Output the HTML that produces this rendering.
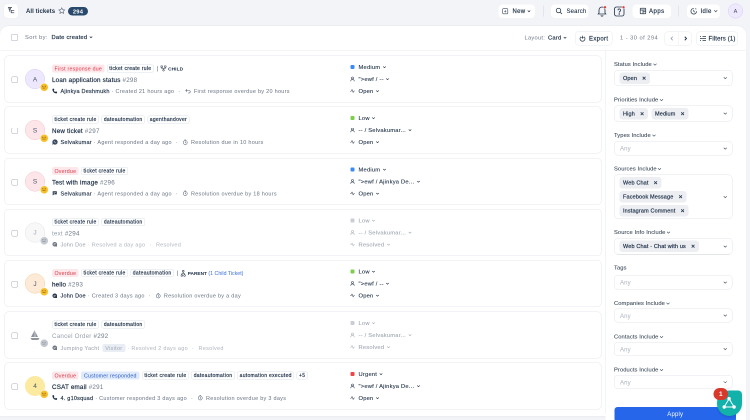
<!DOCTYPE html>
<html><head><meta charset="utf-8">
<style>
*{box-sizing:border-box;margin:0;padding:0}
html,body{width:750px;height:420px;overflow:hidden;background:#f3f4f8}
body{font-family:"Liberation Sans",sans-serif;color:#1e2f45}
#root{position:absolute;left:0;top:0;width:1500px;height:840px;transform:scale(0.5) translateZ(0);transform-origin:0 0;will-change:transform;background:#f3f4f8}
.abs{position:absolute}
.hbtn{position:absolute;background:#fff;border-radius:8px;height:27px;top:9px;display:flex;align-items:center;padding-bottom:1px;font-size:12px;font-weight:400;-webkit-text-stroke:.35px currentColor;color:#1e2f45;letter-spacing:.3px}
.vsep{position:absolute;width:2px;background:#e3e5ea;top:11px;height:22px}
#panel{position:absolute;left:0;top:51px;width:1492px;height:781px;background:#fff;border-radius:18px 18px 0 0;border-top:1.5px solid #e6e8ed;box-shadow:0 2px 3px rgba(20,30,60,.03)}
.tbtn{position:absolute;white-space:nowrap;border:1px solid #e8eaee;border-radius:8px;height:29px;top:62px;display:flex;align-items:center;font-size:12px;font-weight:400;-webkit-text-stroke:.35px currentColor;color:#1e2f45;background:#fff}
.card{position:absolute;left:9px;width:1194px;height:94px;border:1px solid #e6e8ed;border-radius:8px;background:#fff}
.cb{position:absolute;left:13px;top:41px;width:13px;height:13px;border:1.5px solid #a9b1bd;border-radius:3px}
.av{position:absolute;left:40px;top:26px;width:40px;height:40px;border-radius:50%;display:flex;align-items:center;justify-content:center;font-size:13px;color:#4a5568}
.emo{position:absolute;left:69.5px;top:54px;width:17px;height:17px;border-radius:50%;background:#f5b82a;border:1.5px solid #fff}
.chips{position:absolute;left:94px;top:17px;display:flex;align-items:center;height:16px;white-space:nowrap}
.chip{height:16px;border:1px solid #dce2ea;border-radius:4px;padding:0 4px 1px;font-size:10px;font-weight:400;-webkit-text-stroke:.35px currentColor;color:#1b2d45;display:flex;align-items:center;margin-right:4.5px;letter-spacing:.6px}
.chip.red{background:#fde7ea;border-color:#fde7ea;color:#dc3545;font-weight:400;-webkit-text-stroke:0;letter-spacing:.45px;font-size:10.5px;padding:0 4px}
.chip.blue{background:#dfebfd;border-color:#dfebfd;color:#2a5bc6;font-weight:400;-webkit-text-stroke:0;letter-spacing:.4px;font-size:10.5px;padding:0 5px}
.title{position:absolute;left:94px;top:41px;font-size:12.5px;font-weight:400;-webkit-text-stroke:.4px currentColor;white-space:nowrap;color:#1e2f45;letter-spacing:.4px}
.title span{font-weight:400;color:#6f7988;letter-spacing:.5px;-webkit-text-stroke:0}
.meta{position:absolute;left:94px;top:64px;font-size:11px;white-space:nowrap;color:#6a7484;display:flex;align-items:center;letter-spacing:.55px}
.meta b{color:#22334a;font-weight:400;-webkit-text-stroke:.3px currentColor;letter-spacing:.45px}
.meta .dot{margin:0 9px 0 8px}
.meta svg{margin-right:6px}
.rc{position:absolute;left:690px;font-size:11.5px;color:#1e2f45;display:flex;align-items:center;white-space:nowrap;letter-spacing:.45px;-webkit-text-stroke:.2px currentColor}
.rc .ic{width:10px;height:10px;margin-right:7px;display:flex;align-items:center;justify-content:center}
.sq{width:8px;height:8px;border-radius:2px}
.chev{margin-left:4px}
.faded{opacity:.5}
.flabel{position:absolute;left:1228px;font-size:11.5px;color:#3a4757;-webkit-text-stroke:.15px currentColor;white-space:nowrap;letter-spacing:.2px}
.fbox{position:absolute;left:1228px;width:237px;border:1px solid #e3e6eb;border-radius:8px;background:#fff}
.fchip{position:absolute;left:10px;height:23px;background:#eceef2;border-radius:6px;font-size:11px;font-weight:400;-webkit-text-stroke:.35px currentColor;color:#1b2d45;display:flex;align-items:center;padding:0 8px 1px 7px;white-space:nowrap;letter-spacing:.3px}
.fchip i{font-style:normal;margin-left:10px;font-size:10px;-webkit-text-stroke:.5px currentColor}
.any{position:absolute;left:11px;top:6.5px;font-size:12px;letter-spacing:.3px;color:#adb4be}
.fchev{position:absolute;right:9px;top:50%;margin-top:-3px}
</style></head><body>
<div id="root">
  <!-- header -->
  <div class="abs" style="left:8px;top:8px;width:28px;height:28px;background:#fff;border-radius:7px;box-shadow:0 0 0 1px #eef0f3"></div>
  <svg class="abs" style="left:12px;top:12px" width="20" height="20" viewBox="0 0 20 20" fill="none" stroke="#4a5668" stroke-width="1.7"><path d="M4 3h8"/><circle cx="7.5" cy="5.5" r="1.6"/><path d="M7.5 7v4.5"/><path d="M16.5 9h-6v4.5h6"/></svg>
  <div class="abs" style="left:52px;top:15px;font-size:12px;font-weight:700;letter-spacing:.15px;color:#1e2f45">All tickets</div>
  <svg class="abs" style="left:116px;top:14px" width="15" height="15" viewBox="0 0 24 24" fill="none" stroke="#5a6677" stroke-width="1.8"><path d="M12 2.5l2.9 6.1 6.6.8-4.9 4.5 1.3 6.6L12 17.2l-5.9 3.3 1.3-6.6-4.9-4.5 6.6-.8z"/></svg>
  <div class="abs" style="left:136px;top:14px;width:40px;height:17px;border-radius:9px;background:#28496b;color:#fff;font-size:11.5px;font-weight:700;display:flex;align-items:center;justify-content:center;letter-spacing:.5px">294</div>

  <div class="hbtn" style="left:997px;width:73px"><svg style="margin-left:7px" width="13" height="13" viewBox="0 0 14 14" fill="none" stroke="#3d4a5c" stroke-width="1.3"><rect x="1.5" y="1.5" width="11" height="11" rx="1.5"/><path d="M7 4.5v5M4.5 7h5"/></svg><span style="margin-left:8px;letter-spacing:.6px">New</span><svg style="margin-left:3px" width="8" height="8" viewBox="0 0 8 8" fill="none" stroke="#1e2f45" stroke-width="1.3"><path d="M1.5 3l2.5 2.5L6.5 3"/></svg></div>
  <div class="vsep" style="left:1086px"></div>
  <div class="hbtn" style="left:1102px;width:75px;-webkit-text-stroke:.15px currentColor"><svg style="margin-left:9px" width="14" height="14" viewBox="0 0 14 14" fill="none" stroke="#1e2f45" stroke-width="1.5"><circle cx="6" cy="6" r="4.5"/><path d="M9.5 9.5l3.5 3.5"/></svg><span style="margin-left:8px;letter-spacing:.3px">Search</span></div>
  <svg class="abs" style="left:1194px;top:11px" width="20" height="22" viewBox="0 0 20 22" fill="none" stroke="#2b3a4e" stroke-width="1.7"><path d="M4 15V9a6 6 0 0 1 12 0v6l1.5 2h-15z"/><path d="M8 19.5a2 2 0 0 0 4 0"/><circle cx="16" cy="3.5" r="2.8" fill="#e53935" stroke="#f3f4f8" stroke-width="1"/></svg>
  <svg class="abs" style="left:1227px;top:11px" width="24" height="23" viewBox="0 0 24 23" fill="none" stroke="#2b3a4e" stroke-width="1.7"><rect x="2" y="3" width="19" height="18" rx="4"/><path d="M9 9.5a2.6 2.6 0 1 1 3.6 2.4c-.8.4-1.1.9-1.1 1.8v.6"/><circle cx="11.5" cy="17" r=".6" fill="#2b3a4e"/><circle cx="20" cy="3.5" r="2.8" fill="#e53935" stroke="#f3f4f8" stroke-width="1"/></svg>
  <div class="hbtn" style="left:1265px;width:77px"><svg style="margin-left:14px" width="14" height="14" viewBox="0 0 14 14" fill="none" stroke="#2b3a4e" stroke-width="1.4"><rect x="1.5" y="1.5" width="11" height="11" rx="1"/><path d="M1.5 5h11M7 5v7.5M7 8.5h5.5"/></svg><span style="margin-left:5px;letter-spacing:1px">Apps</span></div>
  <div class="vsep" style="left:1356px"></div>
  <div class="hbtn" style="left:1374px;width:66px;top:9px"><svg style="margin-left:6px" width="15" height="15" viewBox="0 0 16 16" fill="none" stroke="#2b3a4e" stroke-width="1.6"><path d="M14 8A6 6 0 1 1 8 2"/><path d="M8 5v3l2 2"/><path d="M11 2.5l2.5 1"/></svg><span style="margin-left:6px;letter-spacing:.75px">Idle</span><svg style="margin-left:4px" width="9" height="8" viewBox="0 0 9 8" fill="none" stroke="#3d4a5c" stroke-width="1.3"><path d="M1.5 2.5l3 3 3-3"/></svg></div>
  <div class="abs" style="left:1456px;top:7px;width:30px;height:30px;border-radius:50%;background:#efe9fd;border:1px solid #d9cdf7;color:#4b4e6d;font-size:11px;display:flex;align-items:center;justify-content:center">A</div>

  <!-- main panel -->
  <div id="panel"></div><div class="abs" style="left:1211px;top:830px;width:281px;height:10px;background:#fff"></div>
  <div class="abs" style="left:22px;top:68px;width:14px;height:14px;border:1.5px solid #a9b1bd;border-radius:3px"></div>
  <div class="abs" style="left:50px;top:67.5px;font-size:11.5px;color:#6f7988;letter-spacing:.76px">Sort by:</div>
  <div class="abs" style="left:103px;top:67.5px;font-size:11.5px;-webkit-text-stroke:.35px currentColor;color:#1e2f45;letter-spacing:.48px">Date created <svg width="8" height="8" viewBox="0 0 8 8" fill="none" stroke="#1e2f45" stroke-width="1.3"><path d="M1.5 3l2.5 2.5L6.5 3"/></svg></div>

  <div class="abs" style="left:1049px;top:68.5px;font-size:11.5px;color:#6f7988;letter-spacing:.5px">Layout:</div>
  <div class="abs" style="left:1096px;top:68.5px;font-size:11.5px;-webkit-text-stroke:.35px currentColor;color:#1e2f45;letter-spacing:.42px">Card <svg width="8" height="8" viewBox="0 0 8 8" fill="none" stroke="#1e2f45" stroke-width="1.3"><path d="M1.5 3l2.5 2.5L6.5 3"/></svg></div>
  <div class="tbtn" style="left:1150px;width:75px"><svg style="margin-left:7px" width="14" height="14" viewBox="0 0 14 14" fill="none" stroke="#2b3a4e" stroke-width="1.5"><path d="M4 3.5a5 5 0 1 0 6 0"/><path d="M7 1.5v5M5 4.5L7 6.5 9 4.5"/></svg><span style="margin-left:6px;letter-spacing:.67px">Export</span></div>
  <div class="abs" style="left:1240px;top:69px;font-size:11.5px;color:#6f7988;letter-spacing:.9px">1 - 30 of 294</div>
  <div class="tbtn" style="left:1329px;width:55px;top:63px;height:28px"><div style="position:absolute;left:27px;top:0;width:1px;height:26px;background:#eceef2"></div><svg style="position:absolute;left:9px;top:8px" width="10" height="10" viewBox="0 0 10 10" fill="none" stroke="#8a93a0" stroke-width="1.5"><path d="M6.5 1.5L3 5l3.5 3.5"/></svg><svg style="position:absolute;left:36px;top:8px" width="10" height="10" viewBox="0 0 10 10" fill="none" stroke="#1e2f45" stroke-width="1.8"><path d="M3.5 1.5L7 5 3.5 8.5"/></svg></div>
  <div class="tbtn" style="left:1392px;width:84px;top:63px;height:28px"><svg style="margin-left:6px" width="14" height="12" viewBox="0 0 14 12" fill="none" stroke="#2b3a4e" stroke-width="1.3"><path d="M6 2h7M1 6h12M6 10h7M1 2h2M1 10h2"/></svg><span style="margin-left:4px;letter-spacing:.3px">Filters (1)</span></div>
  <div class="abs" style="left:1px;top:100px;width:1490px;height:1px;background:#e8eaee"></div>
  <div class="abs" style="left:1210px;top:101px;width:1px;height:726px;background:#e8eaee"></div>

  <div class="card" style="top:111.0px"><div class="cb"></div><div class="av" style="background:#ede8fd;border:1px solid #d9cdf7;color:#4a5568">A</div><div class="emo" style="background:#f6bf2c"><svg width="14" height="14" viewBox="0 0 12 12" style="position:absolute;left:0;top:0"><circle cx="4" cy="4.8" r=".9" fill="#7a4a00"/><circle cx="8" cy="4.8" r=".9" fill="#7a4a00"/><path d="M3.5 7.8h5" stroke="#7a4a00" stroke-width=".9"/></svg></div><div class="chips"><span class="chip red">First response due</span><span class="chip ">ticket create rule</span><span style="width:1px;height:11px;background:#5a6677;margin:0 5px 0 3px"></span><svg width="12" height="12" viewBox="0 0 12 12" fill="none" stroke="#2b3a4e" stroke-width="1.1"><rect x=".8" y=".8" width="3.4" height="3" rx=".6"/><rect x="7.8" y=".8" width="3.4" height="3" rx=".6"/><path d="M2.5 3.8v2.2h7V3.8M6 6v2"/><circle cx="6" cy="9.6" r="1.6"/></svg><span style="font-size:9.5px;font-weight:700;letter-spacing:.2px;margin-left:3px;color:#1b2d45">CHILD</span></div><div class="title" style="color:#1e2f45;">Loan application status <span>#298</span></div><div class="meta"><svg width="11" height="11" viewBox="0 0 12 12" style="transform:scale(1.15)"><path d="M2.5 1.2l1.8-.2 1 2.6-1.2.9c.6 1.3 1.6 2.3 2.9 2.9l.9-1.2 2.6 1-.2 1.8c-.1.6-.6 1-1.2 1C5 10 2 7 1.5 2.4c0-.6.4-1.1 1-1.2z" fill="#1e2f45"/></svg><b style="color:#1e2f45;">Ajinkya Deshmukh</b><span style="margin-left:4px">· Created 21 hours ago</span><span class="dot">·</span><svg width="12" height="10" viewBox="0 0 12 10" fill="none" stroke="#5a6677" stroke-width="1.2"><path d="M4 1.5L1.5 4 4 6.5M1.5 4H8a2.5 2.5 0 0 1 0 5H6"/></svg><span>First response overdue by 20 hours</span></div><div class="rc" style="top:16px;color:#1e2f45"><span class="ic"><span class="sq" style="background:#3b8bf5"></span></span>Medium<svg class="chev" width="8" height="8" viewBox="0 0 8 8" fill="none" stroke="#1e2f45" stroke-width="1.2"><path d="M1.5 3l2.5 2.5L6.5 3"/></svg></div><div class="rc" style="top:40px;color:#1e2f45"><span class="ic"><svg width="10" height="10" viewBox="0 0 10 10" fill="none" stroke="#1e2f45" stroke-width="1.1"><circle cx="5" cy="3" r="2"/><path d="M1.5 9.5c0-2 1.5-3.5 3.5-3.5s3.5 1.5 3.5 3.5"/></svg></span>"&gt;ewf / --<svg class="chev" width="8" height="8" viewBox="0 0 8 8" fill="none" stroke="#1e2f45" stroke-width="1.2"><path d="M1.5 3l2.5 2.5L6.5 3"/></svg></div><div class="rc" style="top:64px;color:#1e2f45"><span class="ic"><svg width="11" height="10" viewBox="0 0 11 10" fill="none" stroke="#1e2f45" stroke-width="1.1"><path d="M.5 5.5h2l2-4 2.5 7 1.5-3.5h2"/></svg></span>Open<svg class="chev" width="8" height="8" viewBox="0 0 8 8" fill="none" stroke="#1e2f45" stroke-width="1.2"><path d="M1.5 3l2.5 2.5L6.5 3"/></svg></div></div>
<div class="card" style="top:213.3px"><div class="cb"></div><div class="av" style="background:#fde6ea;border:1px solid #f6c4ce;color:#4a5568">S</div><div class="emo" style="background:#f6bf2c"><svg width="14" height="14" viewBox="0 0 12 12" style="position:absolute;left:0;top:0"><circle cx="4" cy="4.8" r=".9" fill="#7a4a00"/><circle cx="8" cy="4.8" r=".9" fill="#7a4a00"/><path d="M3.5 7.8h5" stroke="#7a4a00" stroke-width=".9"/></svg></div><div class="chips"><span class="chip ">ticket create rule</span><span class="chip ">dateautomation</span><span class="chip ">agenthandover</span></div><div class="title" style="color:#1e2f45;">New ticket <span>#297</span></div><div class="meta"><svg width="12" height="12" viewBox="0 0 12 12" style="margin-left:-.5px;margin-right:5.5px"><circle cx="6" cy="6" r="5.3" fill="#3a4a60"/><path d="M4 3.8c.3 1.8 1.6 3.2 3.6 3.9l.6-.7" stroke="#fff" stroke-width="1" fill="none"/><path d="M1.2 11l.9-2.4" stroke="#3a4a60" stroke-width="1.8"/></svg><b style="color:#1e2f45;">Selvakumar</b><span style="margin-left:4px">· Agent responded a day ago</span><span class="dot">·</span><svg width="11" height="11" viewBox="0 0 12 12" fill="none" stroke="#5a6677" stroke-width="1.2"><circle cx="6" cy="6.5" r="4.3"/><path d="M6 4.3v2.4l1.4 1M4.5 1h3"/></svg><span>Resolution due in 10 hours</span></div><div class="rc" style="top:16px;color:#1e2f45"><span class="ic"><span class="sq" style="background:#7ccf4c"></span></span>Low<svg class="chev" width="8" height="8" viewBox="0 0 8 8" fill="none" stroke="#1e2f45" stroke-width="1.2"><path d="M1.5 3l2.5 2.5L6.5 3"/></svg></div><div class="rc" style="top:40px;color:#1e2f45"><span class="ic"><svg width="10" height="10" viewBox="0 0 10 10" fill="none" stroke="#1e2f45" stroke-width="1.1"><circle cx="5" cy="3" r="2"/><path d="M1.5 9.5c0-2 1.5-3.5 3.5-3.5s3.5 1.5 3.5 3.5"/></svg></span>-- / Selvakumar...<svg class="chev" width="8" height="8" viewBox="0 0 8 8" fill="none" stroke="#1e2f45" stroke-width="1.2"><path d="M1.5 3l2.5 2.5L6.5 3"/></svg></div><div class="rc" style="top:64px;color:#1e2f45"><span class="ic"><svg width="11" height="10" viewBox="0 0 11 10" fill="none" stroke="#1e2f45" stroke-width="1.1"><path d="M.5 5.5h2l2-4 2.5 7 1.5-3.5h2"/></svg></span>Open<svg class="chev" width="8" height="8" viewBox="0 0 8 8" fill="none" stroke="#1e2f45" stroke-width="1.2"><path d="M1.5 3l2.5 2.5L6.5 3"/></svg></div></div>
<div class="card" style="top:315.6px"><div class="cb"></div><div class="av" style="background:#fde6ea;border:1px solid #f6c4ce;color:#4a5568">S</div><div class="emo" style="background:#f6bf2c"><svg width="14" height="14" viewBox="0 0 12 12" style="position:absolute;left:0;top:0"><circle cx="4" cy="4.8" r=".9" fill="#7a4a00"/><circle cx="8" cy="4.8" r=".9" fill="#7a4a00"/><path d="M3.5 7.8h5" stroke="#7a4a00" stroke-width=".9"/></svg></div><div class="chips"><span class="chip red">Overdue</span><span class="chip ">ticket create rule</span></div><div class="title" style="color:#1e2f45;">Test with image <span>#296</span></div><div class="meta"><svg width="11" height="11" viewBox="0 0 12 12"><path d="M1.5 1.5h9v7H4.5L1.5 11z" fill="#2b3a4e"/><path d="M3.5 4h5M3.5 6h3" stroke="#fff" stroke-width=".9"/></svg><b style="color:#1e2f45;">Selvakumar</b><span style="margin-left:4px">· Agent responded a day ago</span><span class="dot">·</span><svg width="11" height="11" viewBox="0 0 12 12" fill="none" stroke="#5a6677" stroke-width="1.2"><circle cx="6" cy="6.5" r="4.3"/><path d="M6 4.3v2.4l1.4 1M4.5 1h3"/></svg><span>Resolution overdue by 18 hours</span></div><div class="rc" style="top:16px;color:#1e2f45"><span class="ic"><span class="sq" style="background:#3b8bf5"></span></span>Medium<svg class="chev" width="8" height="8" viewBox="0 0 8 8" fill="none" stroke="#1e2f45" stroke-width="1.2"><path d="M1.5 3l2.5 2.5L6.5 3"/></svg></div><div class="rc" style="top:40px;color:#1e2f45"><span class="ic"><svg width="10" height="10" viewBox="0 0 10 10" fill="none" stroke="#1e2f45" stroke-width="1.1"><circle cx="5" cy="3" r="2"/><path d="M1.5 9.5c0-2 1.5-3.5 3.5-3.5s3.5 1.5 3.5 3.5"/></svg></span>"&gt;ewf / Ajinkya De...<svg class="chev" width="8" height="8" viewBox="0 0 8 8" fill="none" stroke="#1e2f45" stroke-width="1.2"><path d="M1.5 3l2.5 2.5L6.5 3"/></svg></div><div class="rc" style="top:64px;color:#1e2f45"><span class="ic"><svg width="11" height="10" viewBox="0 0 11 10" fill="none" stroke="#1e2f45" stroke-width="1.1"><path d="M.5 5.5h2l2-4 2.5 7 1.5-3.5h2"/></svg></span>Open<svg class="chev" width="8" height="8" viewBox="0 0 8 8" fill="none" stroke="#1e2f45" stroke-width="1.2"><path d="M1.5 3l2.5 2.5L6.5 3"/></svg></div></div>
<div class="card" style="top:417.9px"><div class="cb"></div><div class="av" style="background:#f8f8f9;border:1px solid #e3e5e8;color:#a3a9b1">J</div><div class="emo" style="background:#c3c8cf"><svg width="14" height="14" viewBox="0 0 12 12" style="position:absolute;left:0;top:0"><circle cx="4" cy="4.8" r=".9" fill="#7d838b"/><circle cx="8" cy="4.8" r=".9" fill="#7d838b"/><path d="M3.5 7.8h5" stroke="#7d838b" stroke-width=".9"/></svg></div><div class="chips"><span class="chip ">ticket create rule</span><span class="chip ">dateautomation</span></div><div class="title" style="color:#9aa2ad;-webkit-text-stroke:0">text <span>#294</span></div><div class="meta" style="color:#b0b6bf"><svg width="11" height="11" viewBox="0 0 12 12"><path d="M6 1a5 5 0 0 1 5 5v5H6A5 5 0 0 1 6 1z" fill="#6f7782"/><path d="M3.5 5h5M3.5 7.3h3.5" stroke="#fff" stroke-width=".9"/></svg><b style="color:#9aa2ad;-webkit-text-stroke:0">John Doe</b><span style="margin-left:4px">· Resolved a day ago</span><span class="dot">·</span><span>Resolved</span></div><div class="rc" style="top:16px;color:#a3aab4"><span class="ic"><span class="sq" style="background:#c9ced6"></span></span>Low<svg class="chev" width="8" height="8" viewBox="0 0 8 8" fill="none" stroke="#a3aab4" stroke-width="1.2"><path d="M1.5 3l2.5 2.5L6.5 3"/></svg></div><div class="rc" style="top:40px;color:#a3aab4"><span class="ic"><svg width="10" height="10" viewBox="0 0 10 10" fill="none" stroke="#a3aab4" stroke-width="1.1"><circle cx="5" cy="3" r="2"/><path d="M1.5 9.5c0-2 1.5-3.5 3.5-3.5s3.5 1.5 3.5 3.5"/></svg></span>-- / Selvakumar...<svg class="chev" width="8" height="8" viewBox="0 0 8 8" fill="none" stroke="#a3aab4" stroke-width="1.2"><path d="M1.5 3l2.5 2.5L6.5 3"/></svg></div><div class="rc" style="top:64px;color:#a3aab4"><span class="ic"><svg width="11" height="10" viewBox="0 0 11 10" fill="none" stroke="#a3aab4" stroke-width="1.1"><path d="M.5 5.5h2l2-4 2.5 7 1.5-3.5h2"/></svg></span>Resolved<svg class="chev" width="8" height="8" viewBox="0 0 8 8" fill="none" stroke="#a3aab4" stroke-width="1.2"><path d="M1.5 3l2.5 2.5L6.5 3"/></svg></div></div>
<div class="card" style="top:520.2px"><div class="cb"></div><div class="av" style="background:#fdebd8;border:1px solid #f6cfa3;color:#4a5568">J</div><div class="emo" style="background:#f6bf2c"><svg width="14" height="14" viewBox="0 0 12 12" style="position:absolute;left:0;top:0"><circle cx="4" cy="4.8" r=".9" fill="#7a4a00"/><circle cx="8" cy="4.8" r=".9" fill="#7a4a00"/><path d="M3.5 7.8h5" stroke="#7a4a00" stroke-width=".9"/></svg></div><div class="chips"><span class="chip red">Overdue</span><span class="chip ">ticket create rule</span><span class="chip ">dateautomation</span><span style="width:1px;height:11px;background:#5a6677;margin:0 5px 0 3px"></span><svg width="13" height="13" viewBox="0 0 12 12" fill="none" stroke="#2b3a4e" stroke-width="1"><rect x="3.5" y=".8" width="3" height="3" rx=".8"/><path d="M5 3.8v2.5M2.5 6.3h5M2.5 6.3v2.5M7.5 6.3v2.5"/><rect x="1" y="8.8" width="3" height="2.6" rx=".8"/><rect x="6" y="8.8" width="3" height="2.6" rx=".8"/></svg><span style="font-size:9.5px;font-weight:700;letter-spacing:0;margin-left:1px;color:#1b2d45">PARENT</span><span style="font-size:10.5px;color:#3b6fd8;margin-left:3px;letter-spacing:0">(1 Child Ticket)</span></div><div class="title" style="color:#1e2f45;">hello <span>#293</span></div><div class="meta"><svg width="11" height="11" viewBox="0 0 12 12"><path d="M6 1a5 5 0 0 1 5 5v5H6A5 5 0 0 1 6 1z" fill="#2b3a4e"/><path d="M3.5 5h5M3.5 7.3h3.5" stroke="#fff" stroke-width=".9"/></svg><b style="color:#1e2f45;">John Doe</b><span style="margin-left:4px">· Created 3 days ago</span><span class="dot">·</span><svg width="11" height="11" viewBox="0 0 12 12" fill="none" stroke="#5a6677" stroke-width="1.2"><circle cx="6" cy="6.5" r="4.3"/><path d="M6 4.3v2.4l1.4 1M4.5 1h3"/></svg><span>Resolution overdue by a day</span></div><div class="rc" style="top:16px;color:#1e2f45"><span class="ic"><span class="sq" style="background:#7ccf4c"></span></span>Low<svg class="chev" width="8" height="8" viewBox="0 0 8 8" fill="none" stroke="#1e2f45" stroke-width="1.2"><path d="M1.5 3l2.5 2.5L6.5 3"/></svg></div><div class="rc" style="top:40px;color:#1e2f45"><span class="ic"><svg width="10" height="10" viewBox="0 0 10 10" fill="none" stroke="#1e2f45" stroke-width="1.1"><circle cx="5" cy="3" r="2"/><path d="M1.5 9.5c0-2 1.5-3.5 3.5-3.5s3.5 1.5 3.5 3.5"/></svg></span>"&gt;ewf / --<svg class="chev" width="8" height="8" viewBox="0 0 8 8" fill="none" stroke="#1e2f45" stroke-width="1.2"><path d="M1.5 3l2.5 2.5L6.5 3"/></svg></div><div class="rc" style="top:64px;color:#1e2f45"><span class="ic"><svg width="11" height="10" viewBox="0 0 11 10" fill="none" stroke="#1e2f45" stroke-width="1.1"><path d="M.5 5.5h2l2-4 2.5 7 1.5-3.5h2"/></svg></span>Open<svg class="chev" width="8" height="8" viewBox="0 0 8 8" fill="none" stroke="#1e2f45" stroke-width="1.2"><path d="M1.5 3l2.5 2.5L6.5 3"/></svg></div></div>
<div class="card" style="top:622.5px"><div class="cb"></div><div class="av"><svg width="20" height="22" viewBox="0 0 20 22"><path d="M9.5 1L2 15h7.5z" fill="#8f959e"/><path d="M10.5 4v11H16z" fill="#8f959e"/><path d="M1 17h18l-2.5 4h-13z" fill="#8f959e"/></svg></div><div class="emo" style="background:#c3c8cf"><svg width="14" height="14" viewBox="0 0 12 12" style="position:absolute;left:0;top:0"><circle cx="4" cy="4.8" r=".9" fill="#7d838b"/><circle cx="8" cy="4.8" r=".9" fill="#7d838b"/><path d="M3.5 7.8h5" stroke="#7d838b" stroke-width=".9"/></svg></div><div class="chips"><span class="chip ">ticket create rule</span><span class="chip ">dateautomation</span></div><div class="title" style="color:#9aa2ad;-webkit-text-stroke:0">Cancel Order <span>#292</span></div><div class="meta" style="color:#b0b6bf"><svg width="11" height="11" viewBox="0 0 12 12"><path d="M6 1a5 5 0 0 1 5 5v5H6A5 5 0 0 1 6 1z" fill="#6f7782"/><path d="M3.5 5h5M3.5 7.3h3.5" stroke="#fff" stroke-width=".9"/></svg><b style="color:#9aa2ad;-webkit-text-stroke:0">Jumping Yacht</b><span style="background:#e9edf4;border-radius:4px;padding:2px 6px;margin-left:6px;color:#a3aab4">Visitor</span><span style="margin-left:4px">· Resolved 2 days ago</span><span class="dot">·</span><span>Resolved</span></div><div class="rc" style="top:16px;color:#a3aab4"><span class="ic"><span class="sq" style="background:#c9ced6"></span></span>Low<svg class="chev" width="8" height="8" viewBox="0 0 8 8" fill="none" stroke="#a3aab4" stroke-width="1.2"><path d="M1.5 3l2.5 2.5L6.5 3"/></svg></div><div class="rc" style="top:40px;color:#a3aab4"><span class="ic"><svg width="10" height="10" viewBox="0 0 10 10" fill="none" stroke="#a3aab4" stroke-width="1.1"><circle cx="5" cy="3" r="2"/><path d="M1.5 9.5c0-2 1.5-3.5 3.5-3.5s3.5 1.5 3.5 3.5"/></svg></span>-- / Selvakumar...<svg class="chev" width="8" height="8" viewBox="0 0 8 8" fill="none" stroke="#a3aab4" stroke-width="1.2"><path d="M1.5 3l2.5 2.5L6.5 3"/></svg></div><div class="rc" style="top:64px;color:#a3aab4"><span class="ic"><svg width="11" height="10" viewBox="0 0 11 10" fill="none" stroke="#a3aab4" stroke-width="1.1"><path d="M.5 5.5h2l2-4 2.5 7 1.5-3.5h2"/></svg></span>Resolved<svg class="chev" width="8" height="8" viewBox="0 0 8 8" fill="none" stroke="#a3aab4" stroke-width="1.2"><path d="M1.5 3l2.5 2.5L6.5 3"/></svg></div></div>
<div class="card" style="top:724.8px"><div class="cb"></div><div class="av" style="background:#fbeaa0;border:1px solid #fbeaa0;color:#4a5568">4</div><div class="emo" style="background:#f6bf2c"><svg width="14" height="14" viewBox="0 0 12 12" style="position:absolute;left:0;top:0"><circle cx="4" cy="4.8" r=".9" fill="#7a4a00"/><circle cx="8" cy="4.8" r=".9" fill="#7a4a00"/><path d="M3.5 7.8h5" stroke="#7a4a00" stroke-width=".9"/></svg></div><div class="chips"><span class="chip red">Overdue</span><span class="chip blue">Customer responded</span><span class="chip ">ticket create rule</span><span class="chip ">dateautomation</span><span class="chip ">automation executed</span><span class="chip ">+5</span></div><div class="title" style="color:#1e2f45;">CSAT email <span>#291</span></div><div class="meta"><svg width="11" height="11" viewBox="0 0 12 12" style="transform:scale(1.15)"><path d="M2.5 1.2l1.8-.2 1 2.6-1.2.9c.6 1.3 1.6 2.3 2.9 2.9l.9-1.2 2.6 1-.2 1.8c-.1.6-.6 1-1.2 1C5 10 2 7 1.5 2.4c0-.6.4-1.1 1-1.2z" fill="#1e2f45"/></svg><b style="color:#1e2f45;">4. g10squad</b><span style="margin-left:4px">· Customer responded 3 days ago</span><span class="dot">·</span><svg width="11" height="11" viewBox="0 0 12 12" fill="none" stroke="#5a6677" stroke-width="1.2"><circle cx="6" cy="6.5" r="4.3"/><path d="M6 4.3v2.4l1.4 1M4.5 1h3"/></svg><span>Resolution overdue by 3 days</span></div><div class="rc" style="top:16px;color:#1e2f45"><span class="ic"><span class="sq" style="background:#ef4444"></span></span>Urgent<svg class="chev" width="8" height="8" viewBox="0 0 8 8" fill="none" stroke="#1e2f45" stroke-width="1.2"><path d="M1.5 3l2.5 2.5L6.5 3"/></svg></div><div class="rc" style="top:40px;color:#1e2f45"><span class="ic"><svg width="10" height="10" viewBox="0 0 10 10" fill="none" stroke="#1e2f45" stroke-width="1.1"><circle cx="5" cy="3" r="2"/><path d="M1.5 9.5c0-2 1.5-3.5 3.5-3.5s3.5 1.5 3.5 3.5"/></svg></span>"&gt;ewf / Ajinkya De...<svg class="chev" width="8" height="8" viewBox="0 0 8 8" fill="none" stroke="#1e2f45" stroke-width="1.2"><path d="M1.5 3l2.5 2.5L6.5 3"/></svg></div><div class="rc" style="top:64px;color:#1e2f45"><span class="ic"><svg width="11" height="10" viewBox="0 0 11 10" fill="none" stroke="#1e2f45" stroke-width="1.1"><path d="M.5 5.5h2l2-4 2.5 7 1.5-3.5h2"/></svg></span>Open<svg class="chev" width="8" height="8" viewBox="0 0 8 8" fill="none" stroke="#1e2f45" stroke-width="1.2"><path d="M1.5 3l2.5 2.5L6.5 3"/></svg></div></div>

  <!-- filters -->
  <div class="flabel" style="top:122px">Status Include<svg width="8" height="6" viewBox="0 0 8 6" fill="none" stroke="#3d4a5c" stroke-width="1.1" style="margin-left:2px"><path d="M1 1.5l3 3 3-3"/></svg></div>
<div class="fbox" style="top:140px;height:32px"><div class="fchip" style="left:10px;top:4px">Open<i>✕</i></div><svg class="fchev" width="9" height="6" viewBox="0 0 9 6" fill="none" stroke="#3d4a5c" stroke-width="1.2"><path d="M1.5 1.5l3 3 3-3"/></svg></div>
<div class="flabel" style="top:193px">Priorities Include<svg width="8" height="6" viewBox="0 0 8 6" fill="none" stroke="#3d4a5c" stroke-width="1.1" style="margin-left:2px"><path d="M1 1.5l3 3 3-3"/></svg></div>
<div class="fbox" style="top:211px;height:32px"><div class="fchip" style="left:10px;top:4px">High<i>✕</i></div><div class="fchip" style="left:74px;top:4px">Medium<i>✕</i></div><svg class="fchev" width="9" height="6" viewBox="0 0 9 6" fill="none" stroke="#3d4a5c" stroke-width="1.2"><path d="M1.5 1.5l3 3 3-3"/></svg></div>
<div class="flabel" style="top:264px">Types Include<svg width="8" height="6" viewBox="0 0 8 6" fill="none" stroke="#3d4a5c" stroke-width="1.1" style="margin-left:2px"><path d="M1 1.5l3 3 3-3"/></svg></div>
<div class="fbox" style="top:282px;height:29px"><div class="any">Any</div><svg class="fchev" width="9" height="6" viewBox="0 0 9 6" fill="none" stroke="#3d4a5c" stroke-width="1.2"><path d="M1.5 1.5l3 3 3-3"/></svg></div>
<div class="flabel" style="top:331px">Sources Include<svg width="8" height="6" viewBox="0 0 8 6" fill="none" stroke="#3d4a5c" stroke-width="1.1" style="margin-left:2px"><path d="M1 1.5l3 3 3-3"/></svg></div>
<div class="fbox" style="top:349px;height:89px"><div class="fchip" style="left:10px;top:4px">Web Chat<i>✕</i></div><div class="fchip" style="left:10px;top:32px">Facebook Message<i>✕</i></div><div class="fchip" style="left:10px;top:60px">Instagram Comment<i>✕</i></div><svg class="fchev" width="9" height="6" viewBox="0 0 9 6" fill="none" stroke="#3d4a5c" stroke-width="1.2"><path d="M1.5 1.5l3 3 3-3"/></svg></div>
<div class="flabel" style="top:458px">Source Info Include<svg width="8" height="6" viewBox="0 0 8 6" fill="none" stroke="#3d4a5c" stroke-width="1.1" style="margin-left:2px"><path d="M1 1.5l3 3 3-3"/></svg></div>
<div class="fbox" style="top:476px;height:33px"><div class="fchip" style="left:10px;top:4px">Web Chat - Chat with us<i>✕</i></div><svg class="fchev" width="9" height="6" viewBox="0 0 9 6" fill="none" stroke="#3d4a5c" stroke-width="1.2"><path d="M1.5 1.5l3 3 3-3"/></svg></div>
<div class="flabel" style="top:529px">Tags</div>
<div class="fbox" style="top:550px;height:29px"><div class="any">Any</div><svg class="fchev" width="9" height="6" viewBox="0 0 9 6" fill="none" stroke="#3d4a5c" stroke-width="1.2"><path d="M1.5 1.5l3 3 3-3"/></svg></div>
<div class="flabel" style="top:600px">Companies Include<svg width="8" height="6" viewBox="0 0 8 6" fill="none" stroke="#3d4a5c" stroke-width="1.1" style="margin-left:2px"><path d="M1 1.5l3 3 3-3"/></svg></div>
<div class="fbox" style="top:617px;height:28px"><div class="any">Any</div><svg class="fchev" width="9" height="6" viewBox="0 0 9 6" fill="none" stroke="#3d4a5c" stroke-width="1.2"><path d="M1.5 1.5l3 3 3-3"/></svg></div>
<div class="flabel" style="top:667px">Contacts Include<svg width="8" height="6" viewBox="0 0 8 6" fill="none" stroke="#3d4a5c" stroke-width="1.1" style="margin-left:2px"><path d="M1 1.5l3 3 3-3"/></svg></div>
<div class="fbox" style="top:684px;height:28px"><div class="any">Any</div><svg class="fchev" width="9" height="6" viewBox="0 0 9 6" fill="none" stroke="#3d4a5c" stroke-width="1.2"><path d="M1.5 1.5l3 3 3-3"/></svg></div>
<div class="flabel" style="top:733px">Products Include<svg width="8" height="6" viewBox="0 0 8 6" fill="none" stroke="#3d4a5c" stroke-width="1.1" style="margin-left:2px"><path d="M1 1.5l3 3 3-3"/></svg></div>
<div class="fbox" style="top:750px;height:28px"><div class="any">Any</div><svg class="fchev" width="9" height="6" viewBox="0 0 9 6" fill="none" stroke="#3d4a5c" stroke-width="1.2"><path d="M1.5 1.5l3 3 3-3"/></svg></div>
<div class="abs" style="left:1229px;top:814px;width:243px;height:30px;background:#2566ea;border-radius:6px;color:#fff;font-size:12px;display:flex;justify-content:center;padding-top:7px;letter-spacing:.4px">Apply</div>
<div class="abs" style="left:1434px;top:781px;width:50px;height:51px;background:#12b2ab;border-radius:25px 8px 25px 25px;box-shadow:0 2px 4px rgba(0,0,0,.15)"></div>
<svg class="abs" style="left:1444px;top:790px" width="30" height="30" viewBox="0 0 30 30"><path d="M14.2 7.4L4.4 24h19.8z" fill="none" stroke="#fff" stroke-width="2"/><circle cx="14.2" cy="7.4" r="3.4" fill="#fff"/><circle cx="4.4" cy="24" r="3.4" fill="#fff"/><circle cx="24.2" cy="24" r="3.4" fill="#fff"/></svg>
<div class="abs" style="left:1427px;top:776px;width:29px;height:24px;background:#d8392b;border-radius:12px;color:#fff;font-size:13px;font-weight:700;padding-bottom:1px;display:flex;align-items:center;justify-content:center">1</div>
</div>
</body></html>
